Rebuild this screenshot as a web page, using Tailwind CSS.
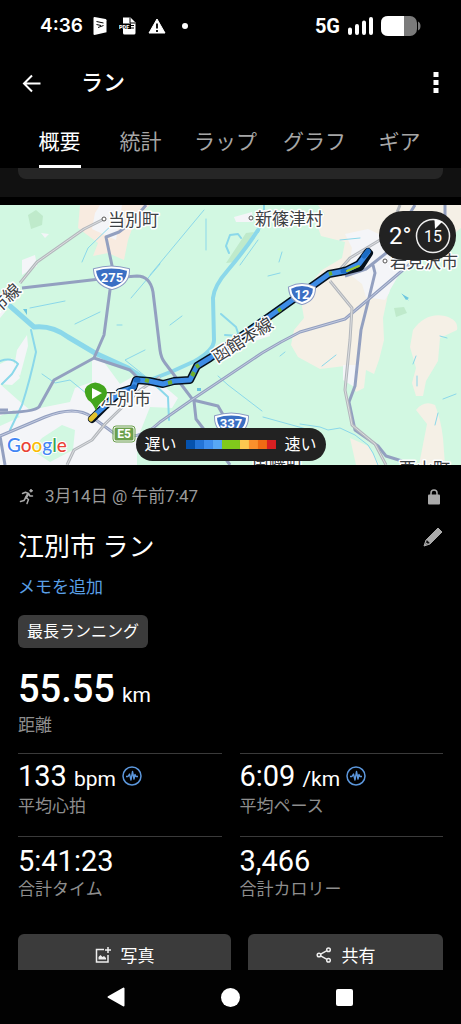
<!DOCTYPE html>
<html lang="ja">

<head>
    <meta charset="UTF-8">
    <meta name="viewport" content="width=device-width, initial-scale=1.0">
    <title>江別市 ラン</title>
    <script src="https://cdn.jsdelivr.net/npm/@tailwindcss/browser@4"></script>
</head>

<body class="bg-black text-white font-[Roboto,'Noto_Sans_CJK_JP',sans-serif] h-screen flex flex-col overflow-hidden">
    <!-- status bar -->
    <div class="h-[52px] shrink-0 flex items-center justify-between px-10">
        <div class="flex items-center">
            <span class="font-[Inter,sans-serif] font-semibold text-[19px] leading-6">4:36</span>
            <svg class="ml-[10px] w-[14px] h-[18px]" viewBox="0 0 14 18" aria-hidden="true">
                <path d="M1.500 0 12.500 2 Q13.500 2.200 13.500 3.200V15.200L1.500 18Q.5 18 .5 17V1Q.5 0 1.500 0Z" fill="#fff" />
                <path d="M3.500 4.500 10.500 6M3.500 7.500 8 8.500M5 10.500 10.500 8.500" stroke="#000" stroke-width="1" />
            </svg>
            <svg class="ml-3 w-[17px] h-[18px]" viewBox="0 0 17 18" aria-hidden="true">
                <path d="M4 .5h7.500l5 5V16q0 1.500-1.500 1.500H5.500Q4 17.500 4 16Z" fill="#fff" />
                <path d="M11 .5V6h5.500" fill="none" stroke="#000" />
                <rect x="0" y="6.500" width="12" height="5.500" fill="#000" />
                <text x="0" y="11.500" font-size="5.500" font-weight="900" fill="#fff">PDF</text>
                <path d="M12 8.500h3M12 11h3" stroke="#000" />
            </svg>
            <svg class="ml-3 w-[18px] h-4" viewBox="0 0 18 16" aria-hidden="true">
                <path d="M9 1 17 15H1Z" fill="#fff" stroke="#fff" stroke-linejoin="round" />
                <path d="M9 5.500v5M9 12v2" stroke="#000" stroke-width="1.800" />
            </svg>
            <span class="ml-4 size-[6px] rounded-full bg-white"></span>
        </div>
        <div class="flex items-center">
            <span class="font-bold text-[20px] leading-6">5G</span>
            <svg class="ml-2 w-[25px] h-[18px]" viewBox="0 0 25 18" stroke="#fff" stroke-width="4" stroke-linecap="round" aria-hidden="true">
                <path d="M2 12.500V16M9 9V16M16 5.500V16M23 2V16" />
            </svg>
            <svg class="ml-2 w-10 h-5" viewBox="0 0 40 20" aria-hidden="true">
                <rect width="36" height="20" rx="7" fill="#7b7b7b" />
                <path d="M7 0H23V20H7Q0 20 0 13V7Q0 0 7 0Z" fill="#fff" />
                <path d="M37 5.500q2.500 1 2.500 4.500t-2.500 4.500Z" fill="#7b7b7b" />
            </svg>
        </div>
    </div>

    <header class="shrink-0">
        <div class="h-[62px] flex items-center px-[22px]">
            <button aria-label="戻る">
                <svg class="w-[19px] h-[19px]" viewBox="0 0 19 19" fill="none" stroke="#fff" stroke-width="2">
                    <path d="M18.500 9.500H2M10 1.500 2 9.500 10 17.500" />
                </svg>
            </button>
            <h1 class="ml-10 text-[22px] leading-8 font-medium">ラン</h1>
            <button class="ml-auto" aria-label="メニュー">
                <svg class="w-[6px] h-[22px]" viewBox="0 0 6 22" fill="#fff">
                    <path d="M.5 0h5v5h-5ZM.5 8h5v5h-5ZM.5 16h5v5h-5Z" />
                </svg>
            </button>
        </div>
        <nav class="h-[54px] flex items-stretch pl-[19px] text-[21px] leading-8 text-[#a6a6a6] whitespace-nowrap">
            <button class="min-w-[81px] flex flex-col items-center justify-between pt-3 text-white">概要<span class="w-[42px] h-[3px] bg-white"></span></button>
            <button class="min-w-[81px] px-[13px] pt-3 flex justify-center">統計</button>
            <button class="min-w-[81px] px-[13px] pt-3 flex justify-center">ラップ</button>
            <button class="min-w-[81px] px-[13px] pt-3 flex justify-center">グラフ</button>
            <button class="min-w-[81px] px-[13px] pt-3 flex justify-center">ギア</button>
        </nav>
    </header>

    <main class="grow min-h-0 overflow-hidden">
        <div class="bg-[#111111] px-[18px] h-[29px]">
            <div class="h-[11px] bg-[#262626] rounded-b-lg"></div>
        </div>

        <!-- map -->
        <section class="relative mt-2 h-[260px]">
            <svg class="block w-full h-full" viewBox="0 205 461 260" preserveAspectRatio="xMidYMid slice" fill="none" aria-label="地図">
                <rect y="205" width="461" height="260" fill="#d2f8e2" />
                <!-- fields and towns -->
                <g fill="#f5f0e6">
                    <path d="M80 205H150L136 218 128 240 124 260 108 253 93 256 98 243 78 228Z" fill="#f8ebe0" />
                    <path d="M318 205H461V228L420 262 404 266 390 285 383 318 384 340 379 360 374 374 366 370 364 388 356 392 345 366 320 369 298 357 291 345 294 330 304 318 300 295 322 270 342 258 345 242 321 236 316 222 325 214Z" />
                    <path d="M413 330Q426 312 445 316 459 320 457 330L440 338 438 361 426 381 423 396 416 396 412 383 416 368 410 347Z" />
                    <path d="M416 410Q424 400 435 405 441 420 443 438L445 465H419L427 424Z" />
                    <path d="M350 438 368 446 380 465H356Z" />
                </g>
                <g fill="#f4f5f8">
                    <path d="M22 260 35 255 37 266 22 275Z" />
                    <path d="M100 205H122L116 240 92 229 95 213Z" />
                    <path d="M234 217 252 212 253 222 236 222Z" />
                    <path d="M0 310 5 312 0 318ZM41 233 49 234 45 238Z" />
                    <path d="M27 335 28 346 20 376 14 368 17 350ZM0 364 12 358 20 378 12 385 0 384Z" />
                    <path d="M0 384 18 400 30 410 70 402 75 388 92 382 92 360 101 358 120 384 134 376 158 381 178 398 172 408 150 407 137 440 137 465H0Z" />
                    <path d="M345 234 368 229 405 246 400 275 385 300 366 297 362 284 348 273 352 248Z" />
                    <path d="M343 365H359L356 388 343 380Z" />
                    <path d="M250 329 268 322 270 336 252 342Z" />
                </g>
                <g fill="#d2f8e2">
                    <path d="M42 438 62 425 75 430 73 450 50 462 32 450Z" />
                    <path d="M420 262 461 250V300H440L405 310 384 318 390 290 404 266Z" />
                    <path d="M0 416 14 410 20 417 0 426Z" />
                </g>
                <g fill="#bfeacb">
                    <path d="M28 215 36 210 43 216 42 225 31 229Z" />
                    <path d="M394 308 404 307 407 313 396 317ZM226 263 246 233 254 232 236 262Z" />
                </g>
                <!-- water -->
                <g stroke="#8bd8ea" stroke-linecap="round" stroke-linejoin="round">
                    <path stroke-width="5" d="M10 306 34 327Q52 325 68 337L95 353 128 368 148 381" />
                    <path stroke-width="4" d="M258 230Q245 250 228 270 214 286 213 298L214 340Q214 350 195 361L173 371 150 380" />
                    <path stroke-width="2" d="M264 205 264 218 258 232M241 238 238 234 230 235 226 246 229 253M31 330 36 352Q30 380 22 405L10 430M0 361Q12 357 18 364L12 374 2 384M221 314 236 327 239 336 225 335M154 384 168 397 169 420" />
                    <path stroke-width="1" d="M150 275 204 210M82 262 88 248 120 217M75 324 100 312M131 298 160 264M117 325H122M206 219V250M240 265 258 240M300 424 320 427 328 430 340 428 355 435 368 445 373 453 378 465M150 380 125 360 145 350M192 377 215 350M218 376 228 385 262 411M195 361 240 340M42 374 55 383 70 380 92 398M263 417 310 430M282 252 279 262M268 276 280 273M170 325 182 316M280 356 285 352M340 240 360 238M322 366 336 355M416 356 413 364M417 376 V386M440 336 447 338M443 399 456 394M438 413 435 425M402 294 408 300M30 308 65 301" />
                </g>
                <path d="M23 309 27 309 27 315ZM197 388H201V391H197ZM402 294 409 298 406 300Z" fill="#6cc6df" />
                <!-- roads -->
                <g stroke="#93a0c0" stroke-width="3" stroke-linejoin="round">
                    <path d="M22 288 100 279 137 276Q150 276 153 292L160 350Q161 358 165 363L193 400 218 406 229 425M194 401 196 419 212 440 230 465" />
                    <path d="M146 205 132 222 119 232 106 237 114 275 110 290 104 335 94 358 54 380 39 407Q34 412 0 413M94 358 130 370 138 378" />
                    <path d="M0 436 45 417Q75 405 92 417L115 434Q140 442 160 422L193 399 262 353Q280 342 300 332L345 319 370 298 410 264M0 436 5 465" />
                    <path d="M345 276 366 269 390 250M373 265 375 273 368 302 361 330 355 386 349 402 355 430 378 446 386 456 402 461M410 213 415 205M445 222V205M0 410 8 410" />
                </g>
                <path stroke="#c4cbe0" stroke-width="1" d="M0 436 45 417Q75 405 92 417L115 434Q140 442 160 422L193 399 262 353Q280 342 300 332L345 319 370 298 410 264" />
                <g stroke-linejoin="round">
                    <path stroke="#b3b7bc" stroke-width="3" d="M20 283 37 262 84 229 104 219M67 465 74 450 92 440 105 424 140 390 160 377M330 281 352 308 350 340 345 390 352 425 375 444 386 465M336 274 350 258 380 240M394 220 400 205" />
                    <path stroke="#dcdde0" stroke-width="1" d="M20 283 37 262 84 229 104 219M67 465 74 450 92 440 105 424 140 390 160 377M330 281 352 308 350 340 345 390 352 425 375 444 386 465M336 274 350 258 380 240" />
                </g>
                <!-- route, black casing under the pace colours -->
                <g stroke-linecap="round" stroke-linejoin="round">
                    <path stroke="#05101c" stroke-width="8" d="M92 419 105 406 120 392 133 388 136 380 149 381 163 384 174 381 190 380 197 366 210 358 270 316 329 274 345 271 359 264 368 252M340 272 360 267 369 253" />
                    <path stroke="#3d8ce6" stroke-width="5" d="M96 414 105 406 120 392 133 388 136 380 149 381 163 384 174 381 190 380 197 366 210 358 270 316 329 274 345 271 359 264 368 252" />
                    <path stroke="#1c6cc4" stroke-width="5" d="M130 390 134 387M136 380 138 380M343 271 345 271M364 256 368 251" />
                    <path stroke="#6fae2c" stroke-width="4" stroke-linecap="butt" d="M117 394 121 392M145 380 149 381M168 383 172 382M192 376 194 372M196 367 199 365M278 311 281 309M329 274 332 273" />
                    <path stroke="#e2c22c" stroke-width="5" d="M91 419 95 415" />
                    <path stroke="#9cc72d" stroke-width="2" d="M347 271 359 266" />
                </g>
                <!-- place names -->
                <g class="font-['Noto_Sans_CJK_JP',sans-serif] [paint-order:stroke]" fill="#3c4043" stroke="#fff" stroke-width="3" stroke-linejoin="round" font-size="17">
                    <text x="108" y="226">当別町</text>
                    <text x="255" y="225">新篠津村</text>
                    <text x="390" y="268">岩見沢市</text>
                    <text x="100" y="405">江別市</text>
                    <text x="252" y="467">南幌町</text>
                    <text x="399" y="475">栗山町</text>
                    <text x="217" y="363" transform="rotate(-32 217 363)">函館本線</text>
                    <text x="-15" y="326" transform="rotate(-43 -15 326)">幌市線</text>
                </g>
                <g fill="#fff" stroke="#555" stroke-width="1">
                    <circle cx="104" cy="219" r="2" />
                    <circle cx="251" cy="218" r="2" />
                    <circle cx="385" cy="261" r="2" />
                </g>
                <!-- route shields -->
                <g fill="#3b6fc4" stroke="#fff" stroke-width="2">
                    <path d="M95 270Q111 265 128 270 128 284 112 288 96 284 95 270Z" stroke="#8c9cc4" stroke-width="4" />
                    <path d="M95 270Q111 265 128 270 128 284 112 288 96 284 95 270Z" />
                    <path d="M290 288Q302 282 314 288 314 300 302 303 291 300 290 288Z" stroke="#8c9cc4" stroke-width="4" />
                    <path d="M290 288Q302 282 314 288 314 300 302 303 291 300 290 288Z" />
                    <path d="M216 417Q231 412 247 417 247 431 231 435 216 431 216 417Z" stroke="#8c9cc4" stroke-width="4" />
                    <path d="M216 417Q231 412 247 417 247 431 231 435 216 431 216 417Z" />
                </g>
                <rect x="114" y="427" width="20" height="14" rx="2" fill="#6b9f4c" stroke="#fff" />
                <rect x="113" y="426" width="22" height="16" rx="3" stroke="#6b9f4c" />
                <g fill="#fff" font-size="13" font-weight="700" text-anchor="middle">
                    <text x="112" y="282">275</text>
                    <text x="302" y="299">12</text>
                    <text x="231" y="428">337</text>
                    <text x="124" y="438" font-size="12">E5</text>
                </g>
                <!-- start pin -->
                <path d="M96 411Q93 403 88 400 82 391 87 386 95 379 104 386 110 392 104 400 98 404 96 411Z" fill="#43a51d" />
                <path d="M92 388 102 393 92 399Z" fill="#fff" />
                <text x="7" y="452" font-size="19" font-weight="500" class="font-[Lato,sans-serif] [paint-order:stroke]" stroke="#fff" stroke-width="2"><tspan fill="#4285f4">G</tspan><tspan fill="#ea4335">o</tspan><tspan fill="#fbbc05">o</tspan><tspan fill="#4285f4">g</tspan><tspan fill="#34a853">l</tspan><tspan fill="#ea4335">e</tspan></text>
            </svg>
            <!-- weather -->
            <div class="absolute top-[6px] right-[5px] h-[49px] w-[77px] rounded-3xl bg-[#222222] flex items-center pl-[10px] gap-1">
                <span class="text-[24px] leading-8">2°</span>
                <svg class="w-9 h-9 shrink-0" viewBox="0 0 36 36" fill="none">
                    <circle cx="18" cy="18" r="16.500" stroke="#eee" stroke-width="1.500" />
                    <path d="M19.500 1.500 27.500 3.500 20 11Z" fill="#fff" />
                    <text x="18" y="24" font-size="16" text-anchor="middle" fill="#fff">15</text>
                </svg>
            </div>
            <!-- pace legend -->
            <div class="absolute bottom-1 left-1/2 -translate-x-1/2 h-[33px] rounded-full bg-[#222222] flex items-center gap-[9px] px-[9px] text-[16px] whitespace-nowrap">
                <span>遅い</span>
                <div class="flex h-[9px]">
                    <span class="w-[9px] bg-[#0552ae]"></span>
                    <span class="w-[9px] bg-[#2374d8]"></span>
                    <span class="w-[9px] bg-[#3e8eee]"></span>
                    <span class="w-[9px] bg-[#57a7f5]"></span>
                    <span class="w-[18px] bg-[#80c91c]"></span>
                    <span class="w-[9px] bg-[#fcc850]"></span>
                    <span class="w-[9px] bg-[#fb902c]"></span>
                    <span class="w-[9px] bg-[#f06b14]"></span>
                    <span class="w-[9px] bg-[#d82022]"></span>
                </div>
                <span>速い</span>
            </div>
        </section>

        <!-- activity summary -->
        <section class="px-[18px] pt-5">
            <div class="flex items-center h-6 text-[17px] text-[#9a9a9a]">
                <svg class="w-[18px] h-[18px]" viewBox="0 0 18 18" fill="none" stroke="#aaa" stroke-width="1.500" stroke-linecap="round" stroke-linejoin="round" aria-hidden="true">
                    <circle cx="13" cy="2.800" r="1.200" fill="#aaa" stroke-width="1" />
                    <path d="M4.500 5.500 7.500 4.300 10.500 5.500 8 9.500 10.500 11.500 9 15.500M10.500 5.500 12 8H14.500M7.500 10 6 12.500 2.500 13.500" />
                    <path d="M10 6 8 9.500" stroke-width="2.500" />
                </svg>
                <span class="ml-[9px]">3月14日 @ 午前7:47</span>
                <svg class="ml-auto mr-[3px] w-3 h-4" viewBox="0 0 12 16" fill="none" aria-label="非公開">
                    <path d="M3 6V4Q3 1 6 1T9 4V6" stroke="#aaa" stroke-width="1.500" />
                    <rect y="5.500" width="12" height="10" rx="1" fill="#aaa" />
                </svg>
            </div>
            <div class="mt-[18px] flex justify-between">
                <h2 class="text-[26px] leading-10">江別市 ラン</h2>
                <button class="self-start" aria-label="名前を編集">
                    <svg class="w-5 h-5" viewBox="0 0 20 20">
                        <path d="M15 1 19 5 7 17 1 19 3 13Z" fill="#aaa" stroke="#aaa" stroke-linejoin="round" />
                        <path d="M3.800 13 6.800 16 3 17.500 2.500 17Z" fill="#111" />
                        <path d="M2 17.500 3.500 15.500 5 17Z" fill="#aaa" />
                    </svg>
                </button>
            </div>
            <a href="#" class="mt-2 block w-fit text-[17px] leading-6 text-[#5a9fe6]">メモを追加</a>
            <div class="mt-4 w-fit h-[33px] flex items-center px-[9px] pt-px rounded-md bg-[#3b3b3b] text-[16px]">最長ランニング</div>

            <div class="mt-[19px]">
                <p class="h-11 leading-[44px]"><span class="text-[38px] font-medium">55.55</span> <span class="ml-[3px] text-[21px]">km</span></p>
                <p class="text-[17px] leading-6 mt-[2px] text-[#8e8e8e]">距離</p>
            </div>

            <div class="mt-4 grid grid-cols-2 gap-x-[18px]">
                <div class="h-[83px] border-t border-[#3a3a3a] pt-[8px]">
                    <p class="flex items-center h-8 leading-8"><span class="whitespace-pre"><span class="text-[29px]">133</span> <span class="ml-[3px] text-[21px]">bpm</span></span>
                        <svg class="ml-[6px] mb-1 w-5 h-5" viewBox="0 0 20 20" fill="none" stroke="#5c97dc" stroke-linejoin="round" aria-hidden="true">
                            <circle cx="10" cy="10" r="9" stroke-width="1.500" />
                            <path d="M4 10.500H6L7.500 8 9 14 10.500 5.500 12 13 13 8.500 14 10.500H16" stroke-width="1.400" />
                        </svg>
                    </p>
                    <p class="text-[17px] leading-6 text-[#8e8e8e]">平均心拍</p>
                </div>
                <div class="h-[83px] border-t border-[#3a3a3a] pt-[8px]">
                    <p class="flex items-center h-8 leading-8"><span class="whitespace-pre"><span class="text-[29px]">6:09</span> <span class="ml-[3px] text-[21px]">/km</span></span>
                        <svg class="ml-[6px] mb-1 w-5 h-5" viewBox="0 0 20 20" fill="none" stroke="#5c97dc" stroke-linejoin="round" aria-hidden="true">
                            <circle cx="10" cy="10" r="9" stroke-width="1.500" />
                            <path d="M4 10.500H6L7.500 8 9 14 10.500 5.500 12 13 13 8.500 14 10.500H16" stroke-width="1.400" />
                        </svg>
                    </p>
                    <p class="text-[17px] leading-6 text-[#8e8e8e]">平均ペース</p>
                </div>
                <div class="h-[83px] border-t border-[#3a3a3a] pt-[8px]">
                    <p class="text-[29px] leading-8">5:41:23</p>
                    <p class="text-[17px] leading-6 text-[#8e8e8e]">合計タイム</p>
                </div>
                <div class="h-[83px] border-t border-[#3a3a3a] pt-[8px]">
                    <p class="text-[29px] leading-8">3,466</p>
                    <p class="text-[17px] leading-6 text-[#8e8e8e]">合計カロリー</p>
                </div>
            </div>

            <div class="mt-[15px] grid grid-cols-[213fr_195fr] gap-[17px] text-[17px]">
                <button class="h-[46px] rounded-md bg-[#3b3b3b] flex items-center justify-center gap-[10px]">
                    <svg class="mb-1 w-4 h-4" viewBox="0 0 16 16" fill="none" stroke="#eee" stroke-width="1.500" aria-hidden="true">
                        <path d="M9 2.500H1.500V15H13V8M13 0V6M10 3H16" />
                        <path d="M3.500 12.500V10L5.500 8 7.500 10 9 9 11 11V12.500Z" fill="#eee" stroke="none" />
                    </svg>
                    写真
                </button>
                <button class="h-[46px] rounded-md bg-[#3b3b3b] flex items-center justify-center gap-[10px]">
                    <svg class="mb-1 w-4 h-4" viewBox="0 0 16 16" fill="none" stroke="#eee" stroke-width="1.500" aria-hidden="true">
                        <circle cx="3" cy="8" r="1.800" />
                        <circle cx="12.500" cy="2.800" r="1.800" />
                        <circle cx="12.500" cy="13.200" r="1.800" />
                        <path d="M4.600 7.100 11 3.600M4.600 8.900 11 12.400" />
                    </svg>
                    共有
                </button>
            </div>
        </section>
    </main>

    <!-- system navigation -->
    <footer class="h-[54px] shrink-0 bg-[#020202] flex items-center justify-center gap-24 pr-[2px]">
        <button aria-label="戻る">
            <svg class="w-[18px] h-5" viewBox="0 0 18 20">
                <path d="M16.500 1.500V18.500L1.500 10Z" fill="#fff" stroke="#fff" stroke-width="2" stroke-linejoin="round" />
            </svg>
        </button>
        <button class="size-[19px] rounded-full bg-white" aria-label="ホーム"></button>
        <button class="size-[17px] rounded-xs bg-white" aria-label="履歴"></button>
    </footer>
</body>

</html>
